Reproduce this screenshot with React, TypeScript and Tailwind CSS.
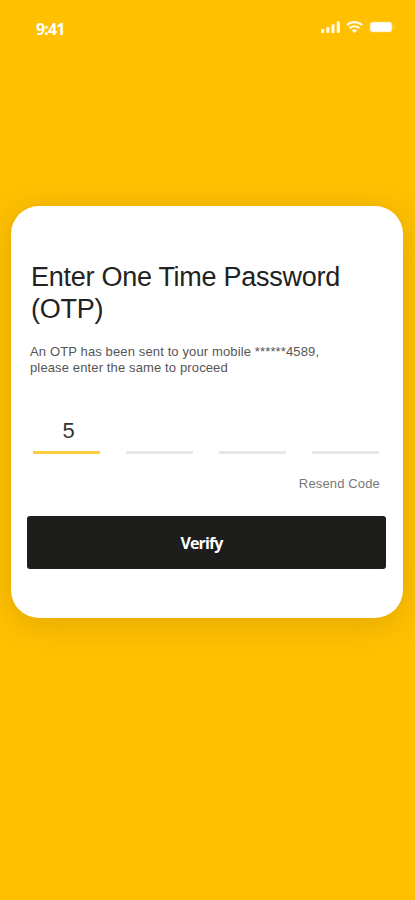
const CODE_LENGTH = 4

const StatusBar = () => (
  <header className="flex h-[54px] items-center justify-between pr-[19px] pl-[36px] text-white">
    <span className="mt-[4px] font-['Open_Sans',sans-serif] text-[16px] font-bold tracking-[-0.9px]">9:41</span>
    <div className="flex items-center gap-[6px]">
      <svg width="19" height="12" viewBox="0 0 19 12" fill="currentColor" fillOpacity="0.88">
        <rect x="0" y="8" width="3.200" height="4" rx="1" />
        <rect x="5.200" y="6" width="3.200" height="6" rx="1" />
        <rect x="10.400" y="3.300" width="3.200" height="8.700" rx="1" />
        <rect x="15.700" y="0.300" width="3.200" height="11.700" rx="1" />
      </svg>
      <svg width="17" height="12" viewBox="0 0 17 12" fill="none" stroke="currentColor" strokeOpacity="0.9" strokeWidth="2.300">
        <path d="M0.800 4.100C5.200 0.100 11.800 0.100 16.200 4.100" />
        <path d="M3.500 7.200C6.400 4.700 10.600 4.700 13.500 7.200" />
        <path d="M5.800 9.200C7.300 7.900 9.700 7.900 11.200 9.200L8.500 11.900Z" fill="currentColor" stroke="none" />
      </svg>
      <svg width="27" height="12" viewBox="0 0 27 12">
        <rect x="0.500" y="0.500" width="23" height="11" rx="3.500" fill="white" fillOpacity="0.3" />
        <rect x="1.300" y="1.300" width="21.400" height="9.400" rx="2.500" fill="white" />
        <path d="M25 4Q26.800 6 25 8Z" fill="white" fillOpacity="0.5" />
      </svg>
    </div>
  </header>
)

export default function App() {
  const code = ['5']

  return (
    <div className="h-[900px] w-[415px] overflow-hidden bg-[#ffc000] font-['Liberation_Sans',Arial,sans-serif]">
      <StatusBar />
      <main className="mt-[152px] ml-[11px] h-[412px] w-[392px] rounded-[28px] bg-white px-[16px] pt-[55px] shadow-[0_5px_32px_rgba(100,70,0,0.2)]">
        <h1 className="pl-[4px] text-[27px] leading-[32px] tracking-[-0.27px] text-[#222]">
          Enter One Time Password<br />(OTP)
        </h1>
        <p className="mt-[19px] pl-[3px] text-[13px] leading-[16px] tracking-[0.13px] text-[#555]">
          An OTP has been sent to your mobile ******4589,<br />please enter the same to proceed
        </p>
        <div className="mt-[35px] flex gap-[26px] pl-[6px]">
          {[...Array(CODE_LENGTH)].map((_, i) => (
            <div
              key={i}
              className={`h-[43px] w-[67px] border-b-[3px] pt-[6px] pl-[4px] text-center text-[22px] leading-[28px] text-[#333] ${code[i] ? 'border-[#ffcc40]' : 'border-[#e7e7e7]'}`}
            >
              {code[i]}
            </div>
          ))}
        </div>
        <div className="mt-[22px] flex justify-end pr-[7px]">
          <button className="text-[13px] leading-[16px] tracking-[0.15px] text-[#777]">Resend Code</button>
        </div>
        <button className="mt-[24px] block h-[53px] w-[359px] rounded-[3px] bg-[#1d1d1b] pr-[10px] font-['Open_Sans',sans-serif] text-[16px] font-bold tracking-[-0.9px] text-white">
          Verify
        </button>
      </main>
    </div>
  )
}
